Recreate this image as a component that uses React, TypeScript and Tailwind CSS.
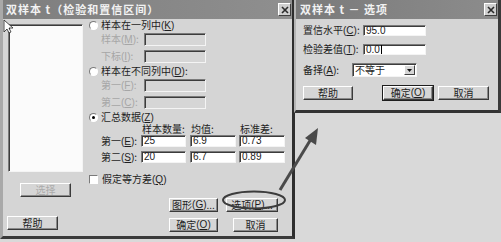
import React from "react";

const FONT = "font-['Noto_Sans_CJK_SC','Liberation_Sans',sans-serif]";

function Btn({
  children,
  className = "",
  def = false,
  disabled = false,
}: {
  children: React.ReactNode;
  className?: string;
  def?: boolean;
  disabled?: boolean;
}) {
  return (
    <div
      className={`flex h-[14px] shrink-0 items-center justify-center bg-[#d6d6d6] border border-t-white border-l-white border-r-[#3a3a3a] border-b-[#3a3a3a] shadow-[inset_-1px_-1px_#8a8a8a] text-[10px] leading-none ${
        disabled ? "text-[#ababab]" : "text-[#1e1e1e]"
      } ${def ? "outline outline-1 outline-[#1e1e1e]" : ""} ${className}`}
    >
      {children}
    </div>
  );
}

function Field({
  value = "",
  className = "",
  disabled = false,
  caret = false,
}: {
  value?: string;
  className?: string;
  disabled?: boolean;
  caret?: boolean;
}) {
  return (
    <div
      className={`flex shrink-0 items-center border border-t-[#7a7a7a] border-l-[#7a7a7a] border-r-[#f4f4f4] border-b-[#f4f4f4] shadow-[inset_1px_1px_#3c3c3c] pl-[2px] font-['Liberation_Sans',sans-serif] text-[10px] leading-none text-[#222] ${
        disabled ? "bg-[#d6d6d6]" : "bg-white"
      } ${className}`}
    >
      {value}
      {caret && <span className="ml-[1px] inline-block h-[9px] w-px bg-black" />}
    </div>
  );
}

function Radio({ checked = false }: { checked?: boolean }) {
  return (
    <div className="relative flex h-[9px] w-[9px] shrink-0 items-center justify-center rounded-full border border-t-[#7a7a7a] border-l-[#7a7a7a] border-r-white border-b-white bg-white">
      {checked && <div className="h-[3px] w-[3px] rounded-full bg-black" />}
    </div>
  );
}

function M({ k }: { k: string }) {
  return (
    <span className="font-['Liberation_Sans',sans-serif]">
      (<span className="underline">{k}</span>)
    </span>
  );
}

function Close({ className = "" }: { className?: string }) {
  return (
    <div
      className={`flex h-[13px] w-[13px] items-center justify-center bg-[#cfcfcf] border border-t-white border-l-white border-r-[#404040] border-b-[#404040] ${className}`}
    >
      <svg width="8" height="8" viewBox="0 0 8 8">
        <path d="M1 1 L7 7 M7 1 L1 7" stroke="#2a2a2a" strokeWidth="1.6" />
      </svg>
    </div>
  );
}

function MainDialog() {
  return (
    <div className="absolute left-0 top-0 flex h-[239px] w-[295px] flex-col bg-[#d5d5d5] border-l-[3px] border-l-[#a9a9a9] border-r-[3px] border-r-[#2e2e2e] border-b-[3px] border-b-[#3a3a3a]">
      {/* title bar */}
      <div className="flex h-[19px] shrink-0 items-center justify-between bg-gradient-to-r from-[#7e7e7e] to-[#8f8f8f] pl-[3px] pr-[1px]">
        <span className="text-[11px] font-bold leading-none tracking-[1px] text-[#f2f2f2]">
          双样本 t（检验和置信区间）
        </span>
        <Close />
      </div>

      <div className="flex pl-[5px]">
        {/* left column */}
        <div className="flex w-[76px] flex-col">
          <div className="mt-[5px] h-[148px] w-[75px] border border-t-[#7a7a7a] border-l-[#7a7a7a] border-r-[#f4f4f4] border-b-[#f4f4f4] shadow-[inset_1px_1px_#3c3c3c] bg-[#fbfbfb]" />
          <Btn disabled className="ml-[12px] mt-[11px] w-[51px]">
            选择
          </Btn>
          <Btn className="ml-[-1px] mt-[19px] w-[51px]">帮助</Btn>
        </div>

        {/* right column */}
        <div className="ml-[5px] flex flex-1 flex-col text-[10px] leading-none text-[#1e1e1e]">
          <div className="mt-[1px] flex h-[11px] items-center gap-[3px]">
            <Radio />
            <span>
              样本在一列中<M k="K" />
            </span>
          </div>
          <div className="mt-[2px] flex h-[13px] items-center">
            <span className="w-[55px] pl-[12px] text-[#a6a6a6]">
              样本<M k="M" />:
            </span>
            <Field disabled className="h-[13px] w-[62px]" />
          </div>
          <div className="mt-[4px] flex h-[13px] items-center">
            <span className="w-[55px] pl-[12px] text-[#a6a6a6]">
              下标<M k="I" />:
            </span>
            <Field disabled className="h-[13px] w-[62px]" />
          </div>
          <div className="mt-[3px] flex h-[11px] items-center gap-[3px]">
            <Radio />
            <span>
              样本在不同列中<M k="D" />:
            </span>
          </div>
          <div className="mt-[2px] flex h-[13px] items-center">
            <span className="w-[55px] pl-[12px] text-[#a6a6a6]">
              第一<M k="F" />:
            </span>
            <Field disabled className="h-[13px] w-[62px]" />
          </div>
          <div className="mt-[4px] flex h-[13px] items-center">
            <span className="w-[55px] pl-[12px] text-[#a6a6a6]">
              第二<M k="C" />:
            </span>
            <Field disabled className="h-[13px] w-[62px]" />
          </div>
          <div className="mt-[3px] flex h-[10px] items-center gap-[3px]">
            <Radio checked />
            <span>
              汇总数据<M k="Z" />
            </span>
          </div>
          <div className="mt-[2px] flex h-[10px] items-center">
            <span className="w-[53px]" />
            <span className="w-[49px]">样本数量:</span>
            <span className="w-[49px]">均值:</span>
            <span>标准差:</span>
          </div>
          <div className="mt-[1px] flex h-[12px] items-center">
            <span className="w-[52px] pl-[12px]">
              第一<M k="E" />:
            </span>
            <Field value="25" className="h-[12px] w-[45px]" />
            <Field value="6.9" className="ml-[4px] h-[12px] w-[46px]" />
            <Field value="0.73" className="ml-[3px] h-[12px] w-[46px]" />
          </div>
          <div className="mt-[4px] flex h-[12px] items-center">
            <span className="w-[52px] pl-[12px]">
              第二<M k="S" />:
            </span>
            <Field value="20" className="h-[12px] w-[45px]" />
            <Field value="6.7" className="ml-[4px] h-[12px] w-[46px]" />
            <Field value="0.89" className="ml-[3px] h-[12px] w-[46px]" />
          </div>
          <div className="mt-[11px] flex h-[10px] items-center gap-[4px]">
            <div className="h-[9px] w-[9px] shrink-0 border border-t-[#7a7a7a] border-l-[#7a7a7a] border-r-white border-b-white bg-white" />
            <span>
              假定等方差<M k="Q" />
            </span>
          </div>
          <div className="mt-[14px] flex">
            <Btn className="ml-[80px] w-[49px]">
              图形<M k="G" />...
            </Btn>
            <Btn className="ml-[8px] w-[52px]">
              选项<M k="P" />...
            </Btn>
          </div>
          <div className="mt-[6px] flex">
            <Btn className="ml-[80px] w-[49px]">
              确定<M k="O" />
            </Btn>
            <Btn className="ml-[15px] w-[45px]">取消</Btn>
          </div>
        </div>
      </div>
    </div>
  );
}

function OptionsDialog() {
  return (
    <div className="absolute left-[294px] top-0 flex h-[113px] w-[207px] flex-col bg-[#d5d5d5] border-l-[2px] border-l-[#b5b5b5] border-r-[3px] border-r-[#3a3a3a] border-b-[3px] border-b-[#333]">
      <div className="flex h-[19px] shrink-0 items-center justify-between bg-gradient-to-r from-[#7a7a7a] to-[#8c8c8c] pl-[4px] pr-[1px]">
        <span className="text-[11px] font-bold leading-none tracking-[1px] text-[#f2f2f2]">
          双样本 t － 选项
        </span>
        <Close />
      </div>
      <div className="flex flex-col pl-[7px] text-[10px] leading-none text-[#1e1e1e]">
        <div className="mt-[6px] flex h-[11px] items-center">
          <span className="w-[60px]">
            置信水平<M k="C" />:
          </span>
          <Field value="95.0" className="h-[11px] w-[63px]" />
        </div>
        <div className="mt-[8px] flex h-[11px] items-center">
          <span className="w-[60px]">
            检验差值<M k="T" />:
          </span>
          <Field value="0.0" caret className="h-[11px] w-[63px]" />
        </div>
        <div className="mt-[8px] flex h-[14px] items-center">
          <span className="w-[49px]">
            备择<M k="A" />:
          </span>
          <div className="flex h-[14px] w-[65px] items-center border border-t-[#7a7a7a] border-l-[#7a7a7a] border-r-[#f4f4f4] border-b-[#f4f4f4] shadow-[inset_1px_1px_#3c3c3c] bg-white pl-[2px]">
            <span className="flex-1">不等于</span>
            <div className="mr-[1px] flex h-[10px] w-[11px] items-center justify-center bg-[#d6d6d6] border border-t-white border-l-white border-r-[#404040] border-b-[#404040]">
              <svg width="5" height="3" viewBox="0 0 5 3">
                <path d="M0 0 H5 L2.5 3 Z" fill="#111" />
              </svg>
            </div>
          </div>
        </div>
        <div className="mt-[9px] flex">
          <Btn className="w-[50px]">帮助</Btn>
          <Btn def className="ml-[30px] w-[50px]">
            确定<M k="O" />
          </Btn>
          <Btn className="ml-[5px] w-[51px]">取消</Btn>
        </div>
      </div>
    </div>
  );
}

export default function App() {
  return (
    <div className={`relative h-[242px] w-[501px] overflow-hidden bg-[#d9d9d9] ${FONT}`}>
      <MainDialog />
      <OptionsDialog />
      <svg
        className="pointer-events-none absolute left-0 top-0"
        width="501"
        height="242"
        viewBox="0 0 501 242"
      >
        <ellipse cx="254" cy="200" rx="31" ry="8.5" fill="none" stroke="#3c3c3c" strokeWidth="2" />
        <line x1="280" y1="190" x2="311" y2="139" stroke="#4a4a4a" strokeWidth="3" />
        <path d="M318 128 L316 145 L305 138 Z" fill="#4a4a4a" />
        <path
          d="M4 20 L4 32 L7 29 L9 33 L11 32 L9 28 L13 28 Z"
          fill="#fff"
          stroke="#222"
          strokeWidth="0.8"
        />
      </svg>
    </div>
  );
}
